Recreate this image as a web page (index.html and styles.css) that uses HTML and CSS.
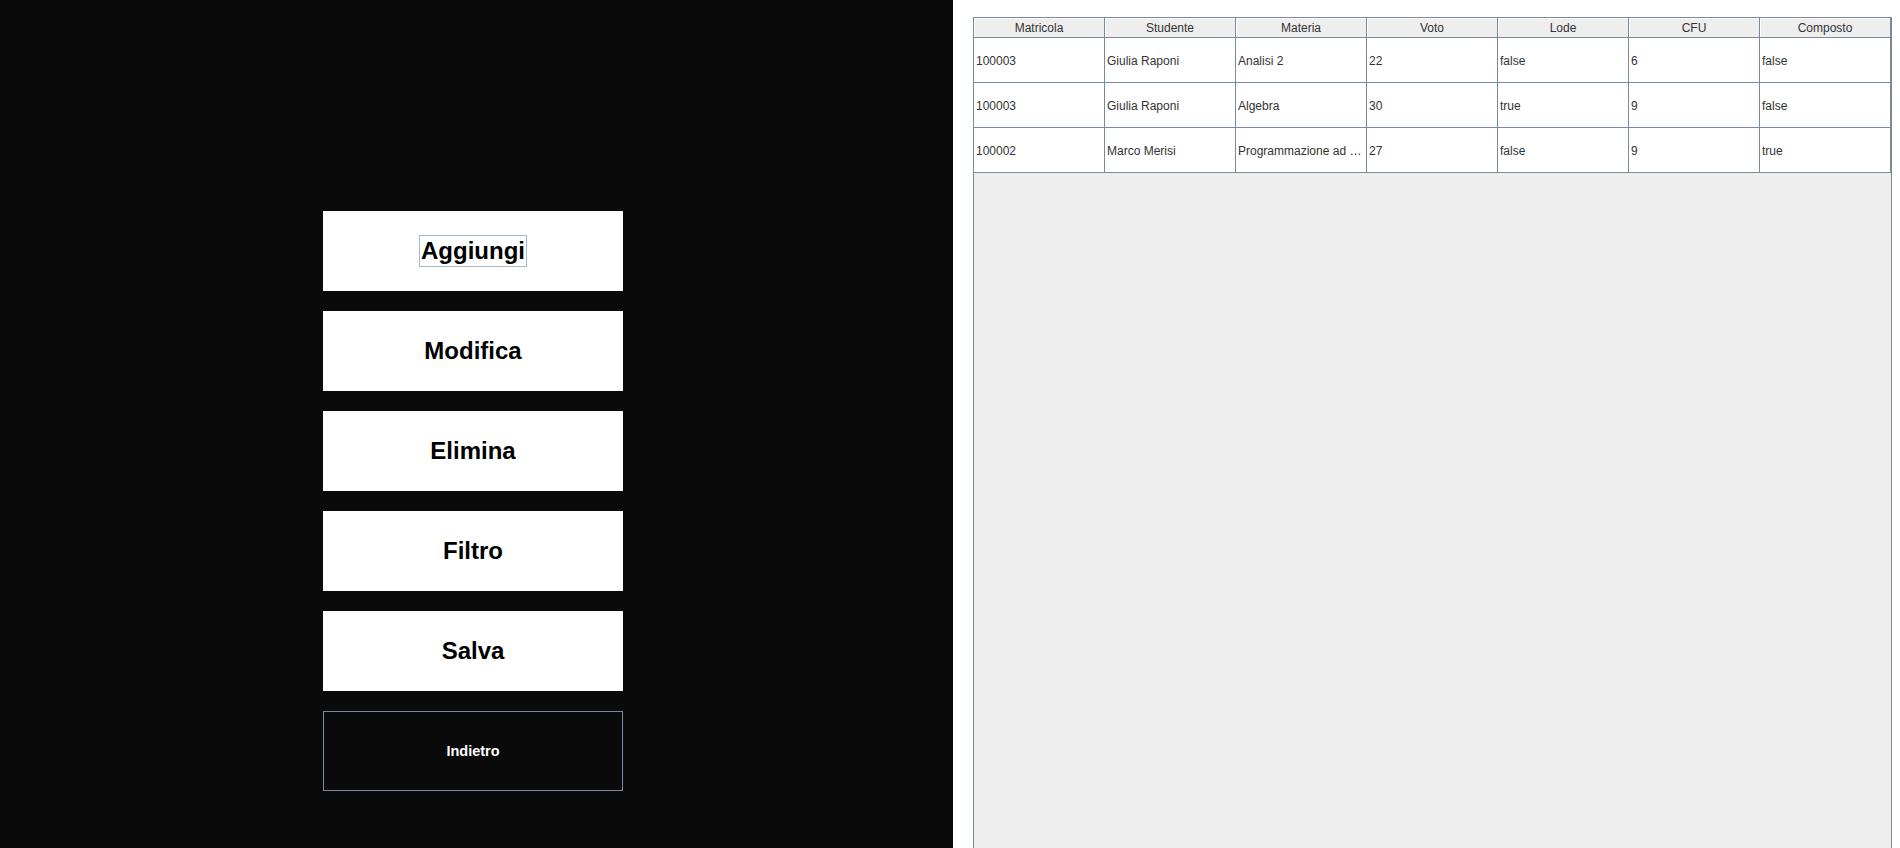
FILE: index.html
```html
<!DOCTYPE html>
<html lang="it">
<head>
  <meta charset="UTF-8"/>
  <title>Libretto</title>
  <link rel="stylesheet" href="styles.css">
</head>
<body>
  <div class="menu">
    <button class="btn"><span class="focus">Aggiungi</span></button>
    <button class="btn">Modifica</button>
    <button class="btn">Elimina</button>
    <button class="btn">Filtro</button>
    <button class="btn">Salva</button>
    <button class="btn back">Indietro</button>
  </div>

  <div class="side">
    <div class="scroll">
      <div class="grid head">
        <div>Matricola</div>
        <div>Studente</div>
        <div>Materia</div>
        <div>Voto</div>
        <div>Lode</div>
        <div>CFU</div>
        <div>Composto</div>
      </div>
      <div class="grid row">
        <div>100003</div><div>Giulia Raponi</div><div>Analisi 2</div><div>22</div><div>false</div><div>6</div><div>false</div>
      </div>
      <div class="grid row">
        <div>100003</div><div>Giulia Raponi</div><div>Algebra</div><div>30</div><div>true</div><div>9</div><div>false</div>
      </div>
      <div class="grid row">
        <div>100002</div><div>Marco Merisi</div><div>Programmazione ad oggetti</div><div>27</div><div>false</div><div>9</div><div>true</div>
      </div>
    </div>
  </div>
</body>
</html>
```

FILE: styles.css
```css
body {
  margin: 0;
  display: flex;
  height: 848px;
  overflow: hidden;
  font-family: "Liberation Sans", Arial, sans-serif;
}

.menu {
  width: 953px;
  background: #0a0a0a;
  display: flex;
  flex-direction: column;
  gap: 20px;
  padding: 211px 0 0 323px;
  box-sizing: border-box;
}
.btn {
  width: 300px; height: 80px;
  background: #fff; color: #000;
  border: none; margin: 0; padding: 0;
  font: bold 24px "Liberation Sans", Arial, sans-serif;
  display: flex; align-items: center; justify-content: center;
}
.btn .focus {
  border: 1px solid #a3b8cc;
  padding: 1px 1px 2px 1px;
  line-height: 27px;
}
.btn.back {
  background: #0a0a0a; color: #fff;
  border: 1px solid #7a8a99;
  font-size: 14.5px;
}

.side {
  width: 947px;
  background: #fff;
  padding: 17px 8px 0 20px;
  box-sizing: border-box;
  display: flex;
}
.scroll {
  flex: 1;
  background: #eeeeee;
  border: 1px solid #7a8a99;
  border-bottom: none;
}
.grid {
  display: grid;
  grid-template-columns: repeat(7, 131px);
  font-size: 12px;
  color: #333;
}
.grid > div {
  border-right: 1px solid #7a8a99;
  border-bottom: 1px solid #7a8a99;
  white-space: nowrap;
  overflow: hidden;
  text-overflow: ellipsis;
  box-sizing: border-box;
}
.head > div {
  height: 20px;
  padding-top: 1px;
  line-height: 19px;
  text-align: center;
  background: #eeeeee;
  box-shadow: inset 1px 1px 0 #fff;
}
.row > div {
  height: 45px;
  padding: 2px 0 0 2px;
  line-height: 42px;
  background: #fff;
}
```
